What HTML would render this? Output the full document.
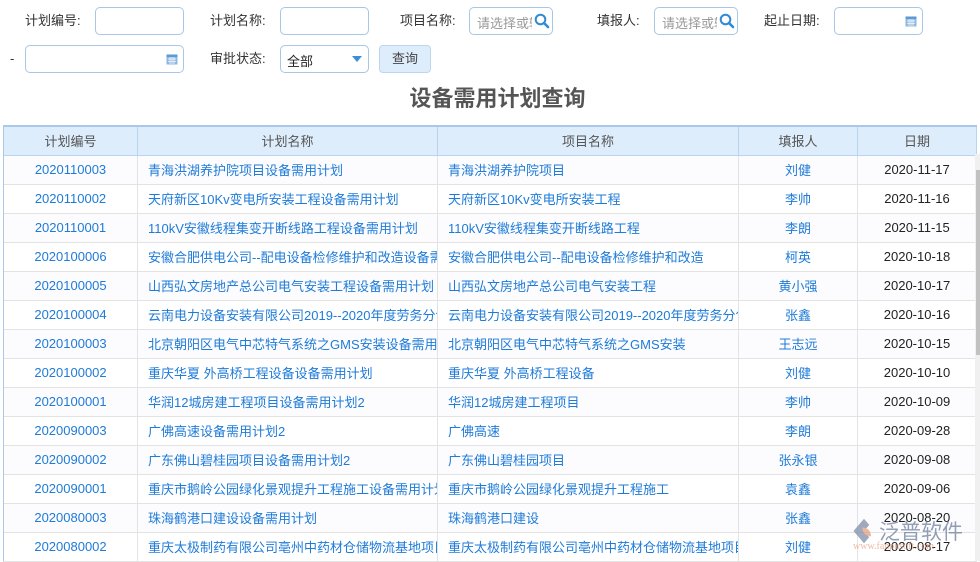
<!DOCTYPE html>
<html><head><meta charset="utf-8"><style>
*{margin:0;padding:0;box-sizing:border-box}
body{width:980px;height:561px;overflow:hidden;background:#fff;font-family:"Liberation Sans","Noto Sans CJK SC",sans-serif;font-size:13px;color:#333;position:relative}
.a{position:absolute}
.lbl{position:absolute;font-size:13px;color:#333;line-height:16px}
.inp{position:absolute;height:28px;border:1px solid #a9c6e6;border-radius:5px;background:#fff}
.ph{position:absolute;left:7px;top:5px;color:#999;font-size:13px;white-space:nowrap;overflow:hidden;width:55px}
table{position:absolute;left:3px;top:125px;width:973px;border-collapse:collapse;table-layout:fixed}
th{height:29px;background:#deedfb;border:1px solid #b8d5ef;border-top:2px solid #a8c9ea;font-weight:normal;color:#555;font-size:13px}
td{height:29px;border:1px solid #e3e3e3;font-size:13px;white-space:nowrap;overflow:hidden;color:#1e7bd8}
tr:nth-child(even) td{background:#fcfcfe}
td.c{text-align:center}
td.l{padding-left:10px}
td.d{text-align:center;color:#222}
</style></head><body>
<div class="lbl" style="left:25px;top:13px">计划编号:</div>
<div class="inp" style="left:95px;top:7px;width:89px"></div>
<div class="lbl" style="left:210px;top:13px">计划名称:</div>
<div class="inp" style="left:280px;top:7px;width:89px"></div>
<div class="lbl" style="left:400px;top:13px">项目名称:</div>
<div class="inp" style="left:469px;top:7px;width:84px"><span class="ph">请选择或输入</span>
<svg class="a" style="left:64px;top:5px" width="16" height="16" viewBox="0 0 16 16"><circle cx="6.5" cy="6.5" r="4.8" fill="none" stroke="#2e8bd6" stroke-width="2"/><path d="M10 10l4 4" stroke="#2e8bd6" stroke-width="2.6" stroke-linecap="round"/></svg></div>
<div class="lbl" style="left:597px;top:13px">填报人:</div>
<div class="inp" style="left:654px;top:7px;width:84px"><span class="ph">请选择或输入</span>
<svg class="a" style="left:64px;top:5px" width="16" height="16" viewBox="0 0 16 16"><circle cx="6.5" cy="6.5" r="4.8" fill="none" stroke="#2e8bd6" stroke-width="2"/><path d="M10 10l4 4" stroke="#2e8bd6" stroke-width="2.6" stroke-linecap="round"/></svg></div>
<div class="lbl" style="left:764px;top:13px">起止日期:</div>
<div class="inp" style="left:834px;top:7px;width:89px">
<svg class="a" style="left:70px;top:7px" width="12" height="12" viewBox="0 0 12 12"><rect x="0.5" y="1.5" width="11" height="10" fill="#8fb8e0"/><rect x="0.5" y="1.5" width="11" height="2.5" fill="#5a9ad6"/><path d="M2 6h8M2 8.3h8M4 4v7M6 4v7M8 4v7" stroke="#fff" stroke-width="0.7"/></svg></div>
<div class="lbl" style="left:10px;top:51px">-</div>
<div class="inp" style="left:25px;top:45px;width:159px">
<svg class="a" style="left:140px;top:7px" width="12" height="12" viewBox="0 0 12 12"><rect x="0.5" y="1.5" width="11" height="10" fill="#8fb8e0"/><rect x="0.5" y="1.5" width="11" height="2.5" fill="#5a9ad6"/><path d="M2 6h8M2 8.3h8M4 4v7M6 4v7M8 4v7" stroke="#fff" stroke-width="0.7"/></svg></div>
<div class="lbl" style="left:210px;top:51px">审批状态:</div>
<div class="inp" style="left:280px;top:45px;width:89px"><span class="a" style="left:6px;top:5px;color:#222">全部</span>
<svg class="a" style="left:71px;top:10px" width="10" height="6"><path d="M0 0h10L5 6z" fill="#3a8fd8"/></svg></div>
<div class="a" style="left:379px;top:45px;width:52px;height:28px;background:#deedfb;border:1px solid #bcd6f0;border-radius:4px;text-align:center;line-height:26px;color:#444">查询</div>
<div class="a" style="left:0;width:980px;top:85px;text-align:center;font-size:22px;font-weight:bold;color:#555;line-height:28px;padding-left:15px">设备需用计划查询</div>
<table>
<colgroup><col style="width:134px"><col style="width:300px"><col style="width:301px"><col style="width:119px"><col style="width:119px"></colgroup>
<tr><th>计划编号</th><th>计划名称</th><th>项目名称</th><th>填报人</th><th>日期</th></tr>
<tr><td class="c">2020110003</td><td class="l">青海洪湖养护院项目设备需用计划</td><td class="l">青海洪湖养护院项目</td><td class="c">刘健</td><td class="d">2020-11-17</td></tr>
<tr><td class="c">2020110002</td><td class="l">天府新区10Kv变电所安装工程设备需用计划</td><td class="l">天府新区10Kv变电所安装工程</td><td class="c">李帅</td><td class="d">2020-11-16</td></tr>
<tr><td class="c">2020110001</td><td class="l">110kV安徽线程集变开断线路工程设备需用计划</td><td class="l">110kV安徽线程集变开断线路工程</td><td class="c">李朗</td><td class="d">2020-11-15</td></tr>
<tr><td class="c">2020100006</td><td class="l">安徽合肥供电公司--配电设备检修维护和改造设备需用计划</td><td class="l">安徽合肥供电公司--配电设备检修维护和改造</td><td class="c">柯英</td><td class="d">2020-10-18</td></tr>
<tr><td class="c">2020100005</td><td class="l">山西弘文房地产总公司电气安装工程设备需用计划</td><td class="l">山西弘文房地产总公司电气安装工程</td><td class="c">黄小强</td><td class="d">2020-10-17</td></tr>
<tr><td class="c">2020100004</td><td class="l">云南电力设备安装有限公司2019--2020年度劳务分包</td><td class="l">云南电力设备安装有限公司2019--2020年度劳务分包</td><td class="c">张鑫</td><td class="d">2020-10-16</td></tr>
<tr><td class="c">2020100003</td><td class="l">北京朝阳区电气中芯特气系统之GMS安装设备需用计划</td><td class="l">北京朝阳区电气中芯特气系统之GMS安装</td><td class="c">王志远</td><td class="d">2020-10-15</td></tr>
<tr><td class="c">2020100002</td><td class="l">重庆华夏 外高桥工程设备设备需用计划</td><td class="l">重庆华夏 外高桥工程设备</td><td class="c">刘健</td><td class="d">2020-10-10</td></tr>
<tr><td class="c">2020100001</td><td class="l">华润12城房建工程项目设备需用计划2</td><td class="l">华润12城房建工程项目</td><td class="c">李帅</td><td class="d">2020-10-09</td></tr>
<tr><td class="c">2020090003</td><td class="l">广佛高速设备需用计划2</td><td class="l">广佛高速</td><td class="c">李朗</td><td class="d">2020-09-28</td></tr>
<tr><td class="c">2020090002</td><td class="l">广东佛山碧桂园项目设备需用计划2</td><td class="l">广东佛山碧桂园项目</td><td class="c">张永银</td><td class="d">2020-09-08</td></tr>
<tr><td class="c">2020090001</td><td class="l">重庆市鹅岭公园绿化景观提升工程施工设备需用计划</td><td class="l">重庆市鹅岭公园绿化景观提升工程施工</td><td class="c">袁鑫</td><td class="d">2020-09-06</td></tr>
<tr><td class="c">2020080003</td><td class="l">珠海鹤港口建设设备需用计划</td><td class="l">珠海鹤港口建设</td><td class="c">张鑫</td><td class="d">2020-08-20</td></tr>
<tr><td class="c">2020080002</td><td class="l">重庆太极制药有限公司亳州中药材仓储物流基地项目</td><td class="l">重庆太极制药有限公司亳州中药材仓储物流基地项目</td><td class="c">刘健</td><td class="d">2020-08-17</td></tr>
</table>
<div class="a" style="left:3px;top:125px;width:1px;height:436px;background:#a8c9ea"></div>
<div class="a" style="left:975px;top:154px;width:5px;height:407px;background:#f0f0f0"></div>
<div class="a" style="left:976px;top:170px;width:4px;height:185px;background:#c1c1c1"></div>
<svg class="a" style="left:850px;top:517px" width="28" height="28" viewBox="0 0 32 32" opacity="0.75"><path d="M16 2L4 16l12 14 6-7-6-7 6-7z" fill="#7f8ea8"/><path d="M14 12c6 0 10 4 10 10-4 0-10-3-10-10z" fill="#e4a07e"/></svg>
<div class="a" style="left:879px;top:516px;font-size:21px;color:#7f8ea8;opacity:0.85">泛普软件</div>
<div class="a" style="left:853px;top:541px;font-size:10px;color:#e4a07e;opacity:0.7;font-family:'Liberation Serif',serif">www.fanpusoft.com</div>
</body></html>
